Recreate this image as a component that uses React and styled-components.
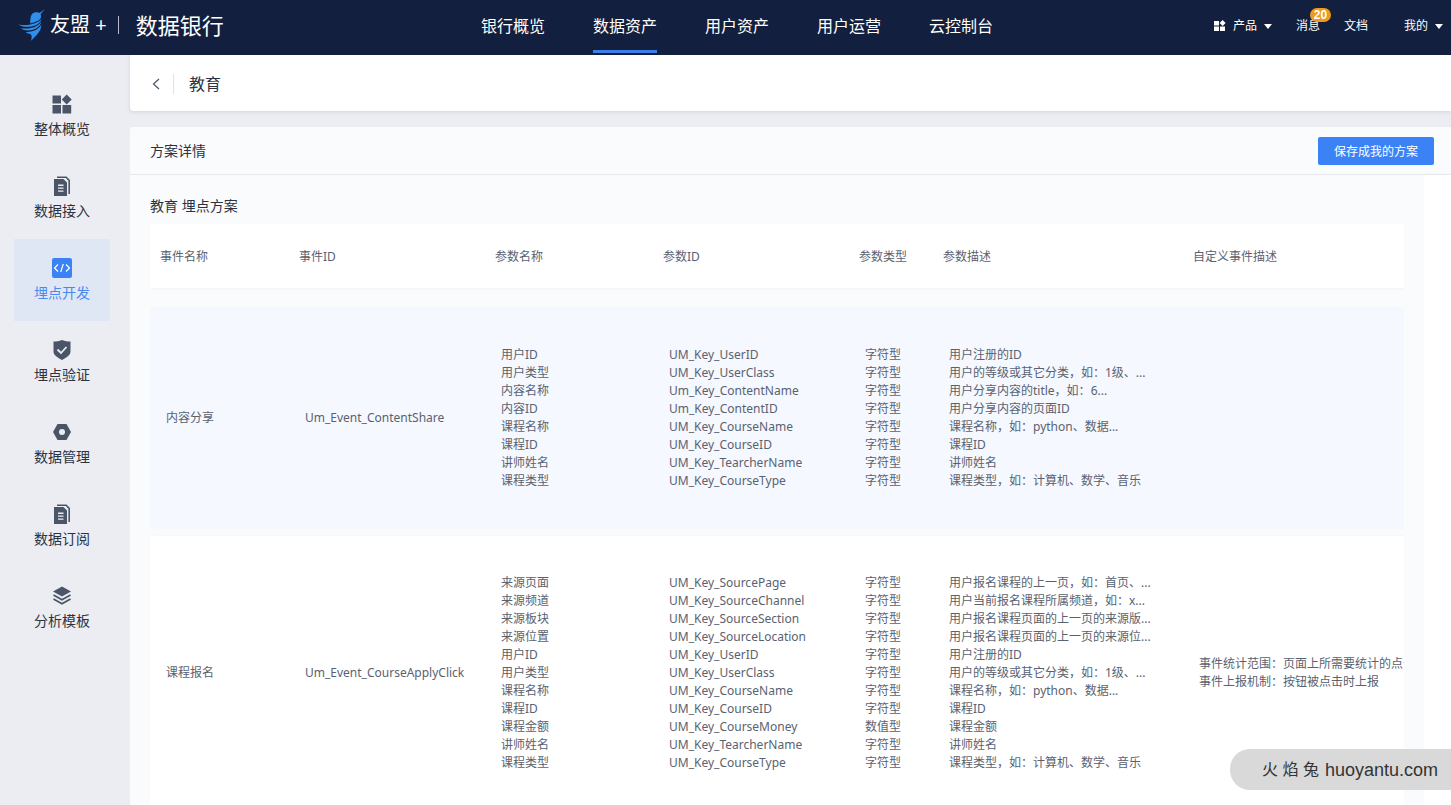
import React from 'react'
import styled, { createGlobalStyle } from 'styled-components'

const GlobalStyle = createGlobalStyle`
  * {
    box-sizing: border-box;
  }
  body {
    margin: 0;
    background: #ecedf2;
    color: #2b3342;
    font-family: "Noto Sans", "Noto Sans CJK SC", sans-serif;
    font-size: 12px;
    line-height: 18px;
  }
  a {
    color: inherit;
    text-decoration: none;
  }
  button {
    font-family: inherit;
    cursor: pointer;
  }
`

const navItems = ['银行概览', '数据资产', '用户资产', '用户运营', '云控制台']

const sideItems = [
  { label: '整体概览', icon: 'grid' },
  { label: '数据接入', icon: 'doc' },
  { label: '埋点开发', icon: 'code', active: true },
  { label: '埋点验证', icon: 'shield' },
  { label: '数据管理', icon: 'hexagon' },
  { label: '数据订阅', icon: 'doc' },
  { label: '分析模板', icon: 'layers' },
]

const columns = [
  { title: '事件名称', width: 139 },
  { title: '事件ID', width: 196 },
  { title: '参数名称', width: 168 },
  { title: '参数ID', width: 196 },
  { title: '参数类型', width: 84 },
  { title: '参数描述', width: 250 },
  { title: '自定义事件描述' },
]

const events = [
  {
    name: '内容分享',
    id: 'Um_Event_ContentShare',
    params: [
      ['用户ID', 'UM_Key_UserID', '字符型', '用户注册的ID'],
      ['用户类型', 'UM_Key_UserClass', '字符型', '用户的等级或其它分类，如：1级、...'],
      ['内容名称', 'Um_Key_ContentName', '字符型', '用户分享内容的title，如：6...'],
      ['内容ID', 'Um_Key_ContentID', '字符型', '用户分享内容的页面ID'],
      ['课程名称', 'UM_Key_CourseName', '字符型', '课程名称，如：python、数据...'],
      ['课程ID', 'UM_Key_CourseID', '字符型', '课程ID'],
      ['讲师姓名', 'UM_Key_TearcherName', '字符型', '讲师姓名'],
      ['课程类型', 'UM_Key_CourseType', '字符型', '课程类型，如：计算机、数学、音乐'],
    ],
    notes: [],
  },
  {
    name: '课程报名',
    id: 'Um_Event_CourseApplyClick',
    params: [
      ['来源页面', 'UM_Key_SourcePage', '字符型', '用户报名课程的上一页，如：首页、...'],
      ['来源频道', 'UM_Key_SourceChannel', '字符型', '用户当前报名课程所属频道，如：x...'],
      ['来源板块', 'UM_Key_SourceSection', '字符型', '用户报名课程页面的上一页的来源版...'],
      ['来源位置', 'UM_Key_SourceLocation', '字符型', '用户报名课程页面的上一页的来源位...'],
      ['用户ID', 'UM_Key_UserID', '字符型', '用户注册的ID'],
      ['用户类型', 'UM_Key_UserClass', '字符型', '用户的等级或其它分类，如：1级、...'],
      ['课程名称', 'UM_Key_CourseName', '字符型', '课程名称，如：python、数据...'],
      ['课程ID', 'UM_Key_CourseID', '字符型', '课程ID'],
      ['课程金额', 'UM_Key_CourseMoney', '数值型', '课程金额'],
      ['讲师姓名', 'UM_Key_TearcherName', '字符型', '讲师姓名'],
      ['课程类型', 'UM_Key_CourseType', '字符型', '课程类型，如：计算机、数学、音乐'],
    ],
    notes: ['事件统计范围：页面上所需要统计的点击', '事件上报机制：按钮被点击时上报'],
  },
]

function BirdLogo() {
  return (
    <svg width="28" height="32" viewBox="0 0 28 32" fill="#2f8fea" aria-hidden="true">
      <path d="M26.800 0L22.600 5.200C23.800 8 22.500 10.500 19.500 12C17 13.200 14.500 13.800 12.300 14.400C12 10 12.500 3.500 17.500 3.200C19.500 3 20.800 3.600 21.600 4z" />
      <path d="M0.300 15.200C4 16.500 8 16.200 12.500 15.400C17.500 14.400 21.500 12.800 23.300 10C23 13.500 19 16.200 14.500 17.200C9 18.400 3.500 18 0.300 15.200z" />
      <path d="M3 19.300C7.500 19.800 12 19.600 16 18.200C19.500 17 22 15 23.300 12.800C22.800 16.500 19.500 19.400 15 20.700C10.500 22 5.500 21.800 3 19.300z" />
      <path d="M7.500 22.900C11.500 23.200 15.500 22.300 18.500 20.500C20.800 19.100 22.400 17.500 23.300 15.800C23.500 22 18 27 13 31.800C14 28.500 14 26.500 12.500 25C11 24.800 9 24.200 7.500 22.900z" />
    </svg>
  )
}

function SideIcon({ name }) {
  return (
    <svg width="20" height="20" viewBox="0 0 20 20" fill="currentColor" aria-hidden="true">
      {name === 'grid' && (
        <path d="M0.500 1.500h8.500v8h-8.500z M0.500 11h8.500v8.500h-8.500z M10.500 11h8.700v8.500h-8.700z M14.700 0.500l5 5-5 5-5-5z" />
      )}
      {name === 'doc' && (
        <>
          <path d="M5 0.500h9.500l3.500 3.500v14h-1.600v-13.300l-2.600-2.600h-8.800z" />
          <path fillRule="evenodd" d="M2 3h9.500l3.500 3.500v13.500h-13z M6 8.600v1.300h5.500v-1.300z M6 11.500v1.300h5.500v-1.300z M6 14.400v1.300h5.500v-1.300z" />
        </>
      )}
      {name === 'code' && (
        <>
          <rect x="0" y="0" width="20" height="20" rx="2" />
          <path fill="none" stroke="#fff" strokeWidth="1.200" d="M6 6.500l-3.500 3.500 3.500 3.500 M14 6.500l3.500 3.500-3.500 3.500 M11.300 6l-2.600 8" />
        </>
      )}
      {name === 'shield' && (
        <>
          <path d="M10 0c3 1.200 5.500 1.400 8.500 1.500v10c0 3.500-3.500 5.500-8.500 8.500c-5-3-8.500-5-8.500-8.500v-10c3 0 5.500-0.300 8.500-1.500z" />
          <path fill="none" stroke="#ecedf2" strokeWidth="1.800" d="M5.500 9.500l3.500 3.500 5.500-6" />
        </>
      )}
      {name === 'hexagon' && (
        <path fillRule="evenodd" d="M5.500 2h9l4.500 8-4.500 8h-9l-4.500-8z M10 7a3 3 0 1 0 0 6a3 3 0 1 0 0-6z" />
      )}
      {name === 'layers' && (
        <>
          <path d="M10 0.500l9 5-9 5-9-5z" />
          <path fill="none" stroke="currentColor" strokeWidth="1.700" d="M1.500 9l8.500 4.800 8.500-4.800 M1.500 13l8.500 4.800 8.500-4.800" />
        </>
      )}
    </svg>
  )
}

function ProductIcon() {
  return (
    <svg width="12" height="12" viewBox="0 0 12 12" fill="currentColor" aria-hidden="true">
      <path d="M0 1h5v4.500h-5z M0 6.500h5v4.500h-5z M6 6.500h5v4.500h-5z M8.600 0l3 3-3 3-3-3z" />
    </svg>
  )
}

function EventRow({ event, tinted }) {
  return (
    <BodyRow $tinted={tinted}>
      <BodyCell>{event.name}</BodyCell>
      <BodyCell>{event.id}</BodyCell>
      {[0, 1, 2, 3].map((field) => (
        <BodyCell key={field}>
          {event.params.map((param) => (
            <Line key={param[1]}>{param[field]}</Line>
          ))}
        </BodyCell>
      ))}
      <BodyCell>
        {event.notes.map((note) => (
          <Line key={note}>{note}</Line>
        ))}
      </BodyCell>
    </BodyRow>
  )
}

function App() {
  return (
    <>
      <GlobalStyle />
      <Page>
        <TopBar>
          <Brand href="#">
            <BirdLogo />
            <BrandName>友盟 +</BrandName>
            <BrandDivider />
            <BrandProduct>数据银行</BrandProduct>
          </Brand>
          <MainNav>
            {navItems.map((item) => (
              <NavLink key={item} href="#" $active={item === '数据资产'}>{item}</NavLink>
            ))}
          </MainNav>
          <UserNav>
            <UserLink href="#"><ProductIcon /><span>产品</span><Caret /></UserLink>
            <UserLink href="#">消息<Badge>20</Badge></UserLink>
            <UserLink href="#">文档</UserLink>
            <UserLink href="#" $last>我的<Caret /></UserLink>
          </UserNav>
        </TopBar>
        <Body>
          <SideBar>
            {sideItems.map((item) => (
              <SideLink key={item.label} href="#" $active={item.active}>
                <SideIcon name={item.icon} />
                {item.label}
              </SideLink>
            ))}
          </SideBar>
          <Main>
            <TitleBar>
              <BackButton type="button" aria-label="返回">
                <svg width="8" height="12" viewBox="0 0 8 12" fill="none" stroke="#4b5563" strokeWidth="1.200">
                  <path d="M7 1L1.500 6L7 11" />
                </svg>
              </BackButton>
              <Title>教育</Title>
            </TitleBar>
            <Panel>
              <PanelHeader>
                <PanelTitle>方案详情</PanelTitle>
                <SaveButton type="button">保存成我的方案</SaveButton>
              </PanelHeader>
              <PanelBody>
                <PlanName>教育 埋点方案</PlanName>
                <TableScroll>
                  <Table>
                    <colgroup>
                      {columns.map((column) => (
                        <col key={column.title} width={column.width} />
                      ))}
                    </colgroup>
                    <thead>
                      <HeadRow>
                        {columns.map((column) => (
                          <HeadCell key={column.title} scope="col">{column.title}</HeadCell>
                        ))}
                      </HeadRow>
                    </thead>
                    <tbody>
                      <SpacerRow aria-hidden="true"><td colSpan={7} /></SpacerRow>
                      {events.map((event, index) => (
                        <EventRow key={event.id} event={event} tinted={index % 2 === 0} />
                      ))}
                    </tbody>
                  </Table>
                </TableScroll>
              </PanelBody>
            </Panel>
          </Main>
        </Body>
        <Watermark>
          <WatermarkName>火 焰 兔</WatermarkName>
          huoyantu.com
        </Watermark>
      </Page>
    </>
  )
}

const Page = styled.div`
  display: flex;
  flex-direction: column;
  height: 100vh;
  overflow: hidden;
`
const TopBar = styled.header`
  display: grid;
  grid-template-columns: 481px 1fr auto;
  flex: none;
  height: 55px;
  padding-right: 8px;
  background: #121f3e;
  color: #fff;
`
const Brand = styled.a`
  display: flex;
  align-items: center;
  height: 50px;
  padding-left: 18px;
`
const BrandName = styled.span`
  margin-left: 4px;
  font-size: 20px;
  line-height: 28px;
`
const BrandDivider = styled.span`
  width: 1px;
  height: 18px;
  margin: 0 17px 0 11px;
  background: #b8bdc9;
`
const BrandProduct = styled.span`
  font-size: 22px;
  line-height: 28px;
`
const MainNav = styled.nav`
  display: flex;
  gap: 48px;
`
const NavLink = styled.a`
  height: 53px;
  border-bottom: 3px solid ${(props) => (props.$active ? '#3d7fe8' : 'transparent')};
  font-size: 16px;
  line-height: 53px;
  white-space: nowrap;
`
const UserNav = styled.nav`
  display: flex;
  gap: 24px;
  height: 52px;
`
const UserLink = styled.a`
  position: relative;
  display: flex;
  align-items: center;
  gap: 7px;
  margin-left: ${(props) => (props.$last ? '12px' : '0')};
  white-space: nowrap;
`
const Caret = styled.i`
  border: 4px solid transparent;
  border-top: 5px solid #fff;
  border-bottom: 0;
`
const Badge = styled.span`
  position: absolute;
  top: 8px;
  left: 14px;
  width: 21px;
  border-radius: 7px;
  background: #f09a1a;
  font-family: "Liberation Sans", sans-serif;
  font-weight: bold;
  line-height: 14px;
  text-align: center;
`
const Body = styled.div`
  display: flex;
  flex: 1;
  min-height: 0;
`
const SideBar = styled.nav`
  flex: none;
  width: 124px;
  padding: 20px 14px;
`
const SideLink = styled.a`
  display: flex;
  flex-direction: column;
  align-items: center;
  gap: 4px;
  height: 82px;
  padding-top: 19px;
  background: ${(props) => (props.$active ? '#dfe7f5' : 'transparent')};
  color: ${(props) => (props.$active ? '#4a8af0' : '#2b3342')};
  font-size: 14px;
  line-height: 22px;

  svg {
    color: ${(props) => (props.$active ? '#3b82f6' : '#4a5668')};
  }
`
const Main = styled.main`
  flex: 1;
  min-width: 0;
  padding-left: 6px;
  overflow: hidden;
`
const TitleBar = styled.div`
  display: flex;
  align-items: center;
  height: 56px;
  padding: 2px 20px 0;
  border-radius: 0 0 0 4px;
  background: #fff;
  box-shadow: 0 1px 4px rgba(30, 40, 70, 0.12);
`
const BackButton = styled.button`
  display: flex;
  align-items: center;
  height: 20px;
  padding: 0 13px 0 2px;
  border: 0;
  border-right: 1px solid #dfe1e6;
  background: none;
`
const Title = styled.h1`
  margin: 0 0 0 15px;
  font-size: 16px;
  font-weight: 400;
  line-height: 24px;
`
const Panel = styled.section`
  margin-top: 16px;
  border-radius: 4px 0 0 0;
  background: #fff;
`
const PanelHeader = styled.div`
  display: flex;
  align-items: center;
  justify-content: space-between;
  height: 48px;
  padding: 0 17px 0 20px;
  border-bottom: 1px solid #e6e8ec;
  border-radius: 4px 0 0 0;
  background: #fafbfd;
`
const PanelTitle = styled.h2`
  margin: 0;
  font-size: 14px;
  font-weight: 400;
  line-height: 22px;
`
const SaveButton = styled.button`
  width: 116px;
  height: 28px;
  padding: 0;
  border: 0;
  border-radius: 2px;
  background: #3b82f6;
  color: #fff;
  font-size: 12px;
`
const PanelBody = styled.div`
  margin-right: 27px;
  padding: 20px 20px 0;
  background: #fafbfd;
`
const PlanName = styled.h3`
  margin: 0;
  font-size: 14px;
  font-weight: 400;
  line-height: 21px;
`
const TableScroll = styled.div`
  overflow: hidden;
`
const Table = styled.table`
  width: 100%;
  table-layout: fixed;
  border-spacing: 0 8px;
  color: #5a6270;
`
const HeadRow = styled.tr`
  background: #fff;
  box-shadow: 0 1px 3px rgba(30, 40, 70, 0.04);
`
const HeadCell = styled.th`
  height: 64px;
  padding: 2px 10px 0;
  font-weight: 400;
  text-align: left;
`
const SpacerRow = styled.tr`
  height: 4px;

  td {
    padding: 0;
  }
`
const BodyRow = styled.tr`
  background: ${(props) => (props.$tinted ? '#f5f8fe' : '#fff')};
  box-shadow: 0 0 4px rgba(30, 40, 70, 0.03);
`
const BodyCell = styled.td`
  padding: 38px 0 38px 16px;
  white-space: nowrap;
`
const Line = styled.div`
  line-height: 18px;
`
const Watermark = styled.div`
  position: fixed;
  right: 0;
  bottom: 15px;
  display: flex;
  align-items: center;
  gap: 6px;
  height: 41px;
  padding: 0 13px 0 32px;
  border-radius: 20px 0 0 20px;
  background: #d9d9d9;
  color: #333;
  font-family: "Liberation Sans", "Noto Sans CJK SC", sans-serif;
  font-size: 18px;
`
const WatermarkName = styled.span`
  font-size: 16px;
`

export default App
